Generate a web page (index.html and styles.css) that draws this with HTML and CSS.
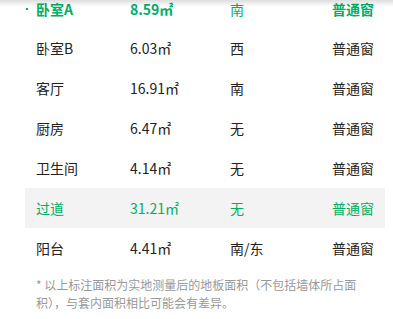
FILE: index.html
```html
<!DOCTYPE html>
<html lang="zh-CN">
<head>
<meta charset="utf-8">
<title>房间面积</title>
<link rel="stylesheet" href="styles.css">
</head>
<body>
<div class="shade"></div>
<div class="panel">
  <div class="rooms">
    <div class="row active">
      <span class="name">卧室A</span><span class="area">8.59㎡</span><span class="dir">南</span><span class="win">普通窗</span>
    </div>
    <div class="row">
      <span class="name">卧室B</span><span class="area">6.03㎡</span><span class="dir">西</span><span class="win">普通窗</span>
    </div>
    <div class="row">
      <span class="name">客厅</span><span class="area">16.91㎡</span><span class="dir">南</span><span class="win">普通窗</span>
    </div>
    <div class="row">
      <span class="name">厨房</span><span class="area">6.47㎡</span><span class="dir">无</span><span class="win">普通窗</span>
    </div>
    <div class="row">
      <span class="name">卫生间</span><span class="area">4.14㎡</span><span class="dir">无</span><span class="win">普通窗</span>
    </div>
    <div class="row hover">
      <span class="name">过道</span><span class="area">31.21㎡</span><span class="dir">无</span><span class="win">普通窗</span>
    </div>
    <div class="row">
      <span class="name">阳台</span><span class="area">4.41㎡</span><span class="dir">南/东</span><span class="win">普通窗</span>
    </div>
  </div>
  <p class="note">* 以上标注面积为实地测量后的地板面积（不包括墙体所占面积），与套内面积相比可能会有差异。</p>
</div>
</body>
</html>
```
FILE: styles.css
```css
html, body {
  margin: 0;
  padding: 0;
  background: #fff;
}
body {
  font-family: "Noto Sans CJK SC", "Microsoft YaHei", sans-serif;
  color: #222;
}
.shade {
  position: fixed;
  top: 0;
  left: 0;
  right: 0;
  height: 7px;
  background: linear-gradient(rgba(0, 0, 0, 0.13), rgba(0, 0, 0, 0));
  z-index: 2;
}
.panel {
  margin: 0 8px 0 25px;
}
.rooms {
  display: flex;
  flex-direction: column;
}
.row {
  position: relative;
  display: grid;
  grid-template-columns: 94px 100px 1fr auto;
  align-items: center;
  height: 40px;
  padding: 0 11px;
  font-size: 14px;
  line-height: 16px;
}
.row .win {
  text-align: right;
}
.row.active {
  box-sizing: border-box;
  height: 28px;
  padding-top: 2px;
  align-items: start;
  line-height: 14px;
  color: #00ae66;
}
.row.active .name,
.row.active .area,
.row.active .win {
  font-weight: bold;
}
.row.active::before {
  content: "";
  position: absolute;
  left: 1px;
  top: 8px;
  width: 2px;
  height: 2px;
  background: #00ae66;
}
.row.hover {
  background: #f3f3f3;
  color: #00ae66;
}
.note {
  margin: 0;
  padding: 8px 0 0 11px;
  width: 328px;
  font-size: 12px;
  line-height: 18px;
  color: #999;
}
```
